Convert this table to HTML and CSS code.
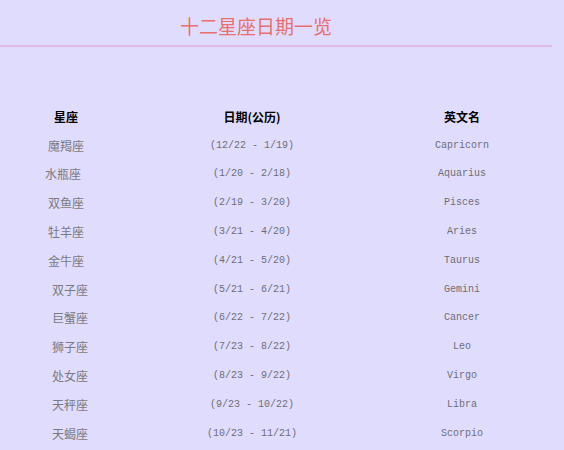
FILE: index.html
```html
<!DOCTYPE html>
<html lang="zh">
<head>
<meta charset="utf-8">
<link rel="stylesheet" href="styles.css">
</head>
<body>
<div class="page">
  <h1 class="title">十二星座日期一览</h1>
  <div class="rule"></div>
  <div class="table">
    <div class="row head"><span class="c1">星座</span><span class="c2">日期(公历)</span><span class="c3">英文名</span></div>
    <div class="row"><span class="c1">魔羯座</span><span class="c2 d">(12/22 - 1/19)</span><span class="c3 e">Capricorn</span></div>
    <div class="row"><span class="c1 l2">水瓶座</span><span class="c2 d">(1/20 - 2/18)</span><span class="c3 e">Aquarius</span></div>
    <div class="row"><span class="c1">双鱼座</span><span class="c2 d">(2/19 - 3/20)</span><span class="c3 e">Pisces</span></div>
    <div class="row"><span class="c1">牡羊座</span><span class="c2 d">(3/21 - 4/20)</span><span class="c3 e">Aries</span></div>
    <div class="row"><span class="c1">金牛座</span><span class="c2 d">(4/21 - 5/20)</span><span class="c3 e">Taurus</span></div>
    <div class="row"><span class="c1 r2">双子座</span><span class="c2 d">(5/21 - 6/21)</span><span class="c3 e">Gemini</span></div>
    <div class="row"><span class="c1 r2">巨蟹座</span><span class="c2 d">(6/22 - 7/22)</span><span class="c3 e">Cancer</span></div>
    <div class="row"><span class="c1 r2">狮子座</span><span class="c2 d">(7/23 - 8/22)</span><span class="c3 e">Leo</span></div>
    <div class="row"><span class="c1 r2">处女座</span><span class="c2 d">(8/23 - 9/22)</span><span class="c3 e">Virgo</span></div>
    <div class="row"><span class="c1 r2">天秤座</span><span class="c2 d">(9/23 - 10/22)</span><span class="c3 e">Libra</span></div>
    <div class="row"><span class="c1 r2">天蝎座</span><span class="c2 d">(10/23 - 11/21)</span><span class="c3 e">Scorpio</span></div>
  </div>
</div>
</body>
</html>
```
FILE: styles.css
```css
html, body {
  margin: 0;
  padding: 0;
  background: #e0dcfe;
}
.page {
  width: 564px;
  height: 450px;
  overflow: hidden;
  font-family: "Noto Sans CJK SC", "Noto Sans", sans-serif;
}
.title {
  margin: 0;
  width: 512px;
  height: 45px;
  line-height: 52px;
  text-align: center;
  font-size: 19px;
  font-weight: normal;
  color: #e8706c;
}
.rule {
  width: 552px;
  height: 2px;
  background: #e2b9e4;
}
.table {
  margin-top: 55px;
  width: 552px;
}
.row {
  display: grid;
  grid-template-columns: 132px 240px 180px;
  height: 28.8px;
  align-items: center;
  font-size: 12px;
  color: #7a7a80;
}
.row span {
  text-align: center;
  white-space: nowrap;
}
.head {
  color: #000;
  font-weight: bold;
}
.l2 { padding-right: 6px; }
.r2 { padding-left: 8px; }
.d, .e {
  font-family: "Liberation Mono", "DejaVu Sans Mono", monospace;
  font-size: 10px;
  color: #6e6e78;
}
```
